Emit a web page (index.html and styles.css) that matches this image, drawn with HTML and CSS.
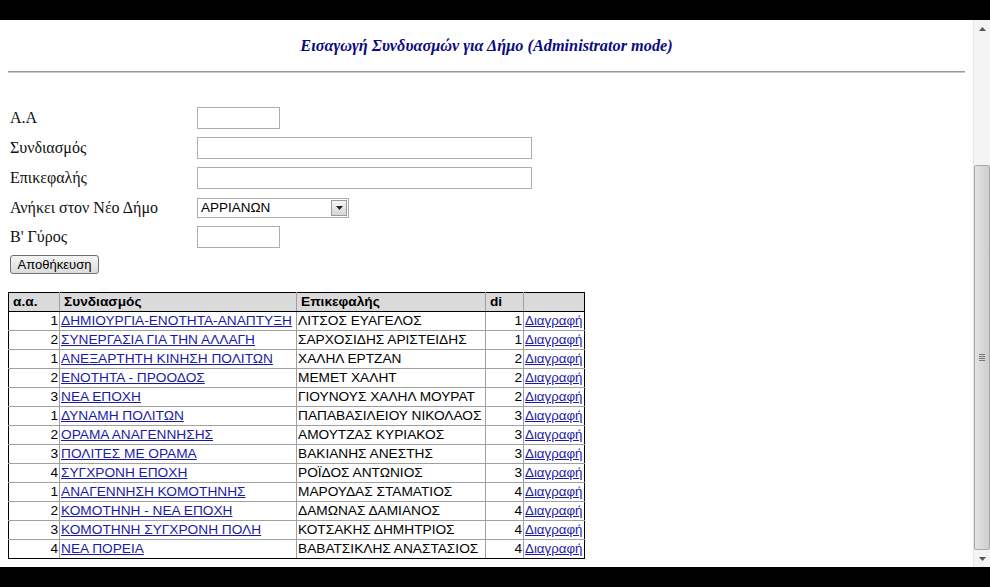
FILE: index.html
```html
<!DOCTYPE html>
<html lang="el">
<head>
<meta charset="utf-8">
<title>Εισαγωγή Συνδυασμών</title>
<link rel="stylesheet" href="styles.css">
</head>
<body>
<div class="topbar"></div>
<div class="main">
  <div class="page">
    <h1 class="title">Εισαγωγή Συνδυασμών για Δήμο (Administrator mode)</h1>
    <hr class="rule">
    <div class="form">
      <div class="frow r30"><span class="lbl">Α.Α</span><span class="inp small"></span></div>
      <div class="frow r30"><span class="lbl">Συνδιασμός</span><span class="inp wide"></span></div>
      <div class="frow r30"><span class="lbl">Επικεφαλής</span><span class="inp wide"></span></div>
      <div class="frow r29"><span class="lbl">Ανήκει στον Νέο Δήμο</span>
        <span class="sel"><span class="seltext">ΑΡΡΙΑΝΩΝ</span><span class="selbtn"><svg width="7" height="4" viewBox="0 0 7 4"><path d="M0 0H7L3.5 4Z" fill="#222"/></svg></span></span>
      </div>
      <div class="frow r29"><span class="lbl">Β' Γύρος</span><span class="inp small"></span></div>
      <button class="btn" type="button">Αποθήκευση</button>
    </div>
    <table class="grid">
      <colgroup><col class="c1"><col class="c2"><col class="c3"><col class="c4"><col class="c5"></colgroup>
      <thead>
        <tr><th>α.α.</th><th>Συνδιασμός</th><th>Επικεφαλής</th><th>di</th><th></th></tr>
      </thead>
      <tbody>
        <tr><td class="num">1</td><td><a href="#">ΔΗΜΙΟΥΡΓΙΑ-ΕΝΟΤΗΤΑ-ΑΝΑΠΤΥΞΗ</a></td><td>ΛΙΤΣΟΣ ΕΥΑΓΕΛΟΣ</td><td class="num">1</td><td class="del"><a href="#">Διαγραφή</a></td></tr>
        <tr><td class="num">2</td><td><a href="#">ΣΥΝΕΡΓΑΣΙΑ ΓΙΑ ΤΗΝ ΑΛΛΑΓΗ</a></td><td>ΣΑΡΧΟΣΙΔΗΣ ΑΡΙΣΤΕΙΔΗΣ</td><td class="num">1</td><td class="del"><a href="#">Διαγραφή</a></td></tr>
        <tr><td class="num">1</td><td><a href="#">ΑΝΕΞΑΡΤΗΤΗ ΚΙΝΗΣΗ ΠΟΛΙΤΩΝ</a></td><td>ΧΑΛΗΛ ΕΡΤΖΑΝ</td><td class="num">2</td><td class="del"><a href="#">Διαγραφή</a></td></tr>
        <tr><td class="num">2</td><td><a href="#">ΕΝΟΤΗΤΑ - ΠΡΟΟΔΟΣ</a></td><td>ΜΕΜΕΤ ΧΑΛΗΤ</td><td class="num">2</td><td class="del"><a href="#">Διαγραφή</a></td></tr>
        <tr><td class="num">3</td><td><a href="#">ΝΕΑ ΕΠΟΧΗ</a></td><td>ΓΙΟΥΝΟΥΣ ΧΑΛΗΛ ΜΟΥΡΑΤ</td><td class="num">2</td><td class="del"><a href="#">Διαγραφή</a></td></tr>
        <tr><td class="num">1</td><td><a href="#">ΔΥΝΑΜΗ ΠΟΛΙΤΩΝ</a></td><td>ΠΑΠΑΒΑΣΙΛΕΙΟΥ ΝΙΚΟΛΑΟΣ</td><td class="num">3</td><td class="del"><a href="#">Διαγραφή</a></td></tr>
        <tr><td class="num">2</td><td><a href="#">ΟΡΑΜΑ ΑΝΑΓΕΝΝΗΣΗΣ</a></td><td>ΑΜΟΥΤΖΑΣ ΚΥΡΙΑΚΟΣ</td><td class="num">3</td><td class="del"><a href="#">Διαγραφή</a></td></tr>
        <tr><td class="num">3</td><td><a href="#">ΠΟΛΙΤΕΣ ΜΕ ΟΡΑΜΑ</a></td><td>ΒΑΚΙΑΝΗΣ ΑΝΕΣΤΗΣ</td><td class="num">3</td><td class="del"><a href="#">Διαγραφή</a></td></tr>
        <tr><td class="num">4</td><td><a href="#">ΣΥΓΧΡΟΝΗ ΕΠΟΧΗ</a></td><td>ΡΟΪΔΟΣ ΑΝΤΩΝΙΟΣ</td><td class="num">3</td><td class="del"><a href="#">Διαγραφή</a></td></tr>
        <tr><td class="num">1</td><td><a href="#">ΑΝΑΓΕΝΝΗΣΗ ΚΟΜΟΤΗΝΗΣ</a></td><td>ΜΑΡΟΥΔΑΣ ΣΤΑΜΑΤΙΟΣ</td><td class="num">4</td><td class="del"><a href="#">Διαγραφή</a></td></tr>
        <tr><td class="num">2</td><td><a href="#">ΚΟΜΟΤΗΝΗ - ΝΕΑ ΕΠΟΧΗ</a></td><td>ΔΑΜΩΝΑΣ ΔΑΜΙΑΝΟΣ</td><td class="num">4</td><td class="del"><a href="#">Διαγραφή</a></td></tr>
        <tr><td class="num">3</td><td><a href="#">ΚΟΜΟΤΗΝΗ ΣΥΓΧΡΟΝΗ ΠΟΛΗ</a></td><td>ΚΟΤΣΑΚΗΣ ΔΗΜΗΤΡΙΟΣ</td><td class="num">4</td><td class="del"><a href="#">Διαγραφή</a></td></tr>
        <tr><td class="num">4</td><td><a href="#">ΝΕΑ ΠΟΡΕΙΑ</a></td><td>ΒΑΒΑΤΣΙΚΛΗΣ ΑΝΑΣΤΑΣΙΟΣ</td><td class="num">4</td><td class="del"><a href="#">Διαγραφή</a></td></tr>
      </tbody>
    </table>
  </div>
  <div class="scrollbar">
    <div class="sb-arrow"><svg width="7" height="4" viewBox="0 0 7 4"><path d="M0 4H7L3.5 0Z" fill="#555"/></svg></div>
    <div class="sb-track-top"></div>
    <div class="sb-thumb"><span class="grip"></span></div>
    <div class="sb-arrow"><svg width="7" height="4" viewBox="0 0 7 4"><path d="M0 0H7L3.5 4Z" fill="#555"/></svg></div>
  </div>
</div>
<div class="bottombar"></div>
</body>
</html>
```

FILE: styles.css
```css
* { box-sizing: border-box; }
html, body { margin: 0; padding: 0; }
body {
  width: 990px;
  height: 587px;
  display: flex;
  flex-direction: column;
  background: #000;
  overflow: hidden;
  font-family: "Liberation Serif", "Times New Roman", serif;
}
.topbar, .bottombar { height: 20px; background: #000; flex: none; }
.main { flex: 1; display: flex; background: #fff; min-height: 0; }
.page { flex: 1; padding: 0 8px; overflow: hidden; }

.title {
  margin: 17px 0 0;
  text-align: center;
  font-size: 16.3px;
  line-height: 18px;
  font-style: italic;
  font-weight: bold;
  color: #0b0b80;
}
.rule {
  margin: 16px 0 0;
  height: 2px;
  border: 0;
  border-top: 1px solid #9a9a9a;
  border-bottom: 1px solid #c8c8c8;
}
.form { margin-top: 30px; display: flex; flex-direction: column; align-items: flex-start; }
.frow { display: flex; align-items: center; }
.r30 { height: 30px; }
.r29 { height: 29px; }
.lbl { width: 189px; padding-left: 2px; font-size: 16px; color: #111; }
.inp { display: block; height: 22px; border: 1px solid #abadb3; background: #fff; }
.small { width: 83px; }
.wide { width: 335px; }
.sel {
  display: flex; align-items: center;
  width: 152px; height: 20px;
  border: 1px solid #a5acb2; background: #fff;
  font-family: "Liberation Sans", Arial, sans-serif; font-size: 13.5px; color: #000;
}
.seltext { flex: 1; padding-left: 3px; }
.selbtn {
  width: 16px; height: 16px; margin-right: 1px;
  display: flex; align-items: center; justify-content: center;
  border: 1px solid #9a9a9a;
  background: linear-gradient(#f6f6f6, #d6d6d6);
}
.btn {
  margin: 4px 0 0 2px;
  width: 89px; height: 19px; padding: 0;
  border: 1px solid #707070; border-radius: 3px;
  background: linear-gradient(#f4f4f4, #dcdcdc);
  font-family: "Liberation Sans", Arial, sans-serif; font-size: 13px; color: #000;
}

.grid {
  margin-top: 18px;
  border-collapse: collapse;
  table-layout: fixed;
  width: 576px;
  border: 1px solid #000;
  font-family: "Liberation Sans", Arial, sans-serif;
  font-size: 13.7px;
}
.c1 { width: 51px; } .c2 { width: 237px; } .c3 { width: 189px; } .c4 { width: 38px; } .c5 { width: 61px; }
.grid th, .grid td {
  box-sizing: content-box;
  border: 1px solid #a0a0a0;
  height: 18px; line-height: 18px;
  padding: 0 1px;
  white-space: nowrap; overflow: hidden;
  text-align: left;
  color: #000;
}
.grid th { background: #dadada; font-weight: bold; padding-left: 4px; border-bottom-color: #000; border-top-color:#000; }
.grid tr > :first-child { border-left-color: #000; }
.grid tr > :last-child { border-right-color: #000; }
.grid tbody tr:last-child td { border-bottom-color: #000; }
.grid td.num { text-align: right; }
.grid td.del { padding: 0 0 0 1px; overflow: visible; font-size: 13.3px; }
.grid a { color: #1a1aa8; text-decoration: underline; }

.scrollbar {
  width: 17px; flex: none;
  display: flex; flex-direction: column;
  background: #f4f4f4;
  border-left: 1px solid #e8e8e8;
}
.sb-arrow { height: 17px; display: flex; align-items: center; justify-content: center; }
.sb-track-top { height: 128px; }
.sb-thumb {
  height: 385px;
  border: 1px solid #a8a8a8; border-radius: 2px;
  background: linear-gradient(90deg, #e2e2e2, #cfcfcf);
  display: flex; align-items: center; justify-content: center;
}
.grip {
  width: 6px; height: 7px;
  background: repeating-linear-gradient(#777 0 1px, transparent 1px 2px);
}
```
